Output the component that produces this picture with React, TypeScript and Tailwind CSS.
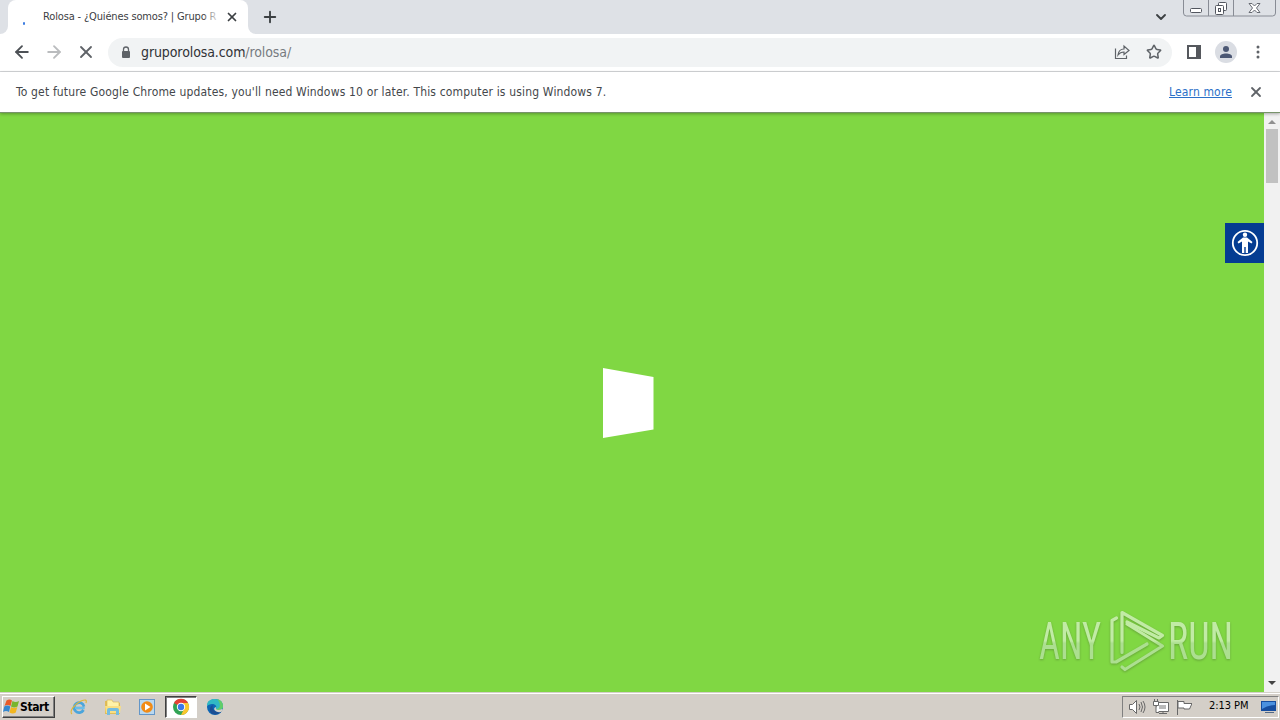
import type { ReactNode } from "react";
import { ArrowLeft, ArrowRight, ChevronDown, MoreVertical, Plus, Star, X } from "lucide-react";

const UI_FONT = "font-['DejaVu_Sans_Condensed','DejaVu_Sans',sans-serif] [font-stretch:condensed]";

function TabStrip() {
  return (
    <header className="flex h-[34px] bg-[#dee1e6]">
      <div className="w-2 bg-white">
        <div className="h-full rounded-br-lg bg-[#dee1e6]" />
      </div>
      <div className="flex w-60 items-center rounded-t-lg bg-white">
        <div className="ml-[15px] mt-3 h-[3px] w-[2px] rounded-full bg-[#3d7de0]" />
        <div className="relative ml-[18px] w-[178px] whitespace-nowrap text-[11px] leading-5 tracking-[-0.15px] text-[#3c4043]">
          Rolosa - ¿Quiénes somos? | Grupo R
          <div className="absolute inset-y-0 right-0 w-4 bg-linear-to-r from-white/20 to-white" />
        </div>
        <X size={14} strokeWidth={3} className="ml-1 shrink-0 text-[#3c4043]" />
      </div>
      <div className="w-2 bg-white">
        <div className="h-full rounded-bl-lg bg-[#dee1e6]" />
      </div>
      <Plus size={18} strokeWidth={2.5} className="ml-[5px] mt-2 text-[#3c4043]" />
      <ChevronDown size={16} strokeWidth={2.8} className="ml-auto mt-[9px] text-[#3c4043]" />
      <WindowButtons />
    </header>
  );
}

function WindowButtons() {
  return (
    <svg width="97" height="18" viewBox="0 0 97 18" className="ml-[14px] shrink-0" fill="none" stroke="#888c95">
      <path d="M.5 0v13q0 3 3 3h86q3 0 3-3V0M25.500 0v16M50.500 0v16" />
      <rect x="7.500" y="8.500" width="11" height="4" rx="1" fill="#fff" stroke="#52565f" />
      <rect x="35.500" y="2.500" width="8" height="8" rx="1" fill="#fff" stroke="#52565f" />
      <rect x="32.500" y="5.500" width="8" height="9" rx="1" fill="#fff" stroke="#52565f" />
      <rect x="35.500" y="8.500" width="2" height="3" stroke="#52565f" />
      <path d="m66 3.500h3l2.500 2.500 2.500-2.500h3l-3.500 4.500 3.500 4.500h-3l-2.500-2.500-2.500 2.500h-3l3.500-4.500z" fill="#fff" stroke="#676b73" />
    </svg>
  );
}

function Toolbar() {
  return (
    <div className="flex h-[38px] items-center border-b border-[#d5d7da] bg-white pb-px text-[#5f6368]">
      <ArrowLeft size={20} strokeWidth={2.2} className="ml-3 text-[#4d5156]" />
      <ArrowRight size={20} strokeWidth={2.2} className="ml-3 text-[#babcbe]" />
      <X size={20} strokeWidth={2.2} className="ml-3" />
      <div className="ml-3 flex h-[29px] w-[1064px] items-center rounded-full bg-[#f1f3f4]">
        <svg width="10" height="13" viewBox="0 0 10 13" className="ml-[13px]">
          <path d="M2.500 6V3.500a2.500 2.500 0 0 1 5 0V6" fill="none" stroke="#5f6368" strokeWidth="1.300" />
          <rect x="1" y="5" width="8" height="7" rx="1" fill="#5f6368" />
        </svg>
        <span className="ml-[10px] text-[14px] tracking-[-0.1px] text-[#303236]">
          gruporolosa.com<span className="text-[#777b80]">/rolosa/</span>
        </span>
        <svg width="16" height="16" viewBox="0 0 16 16" className="ml-auto" fill="none" stroke="currentColor" strokeWidth="1.200">
          <path d="M1.500 4.500v10h11v-3M4 11c.5-4 3-6 6-6V2l5 4.500-5 4V8c-2.500 0-4.500 1-6 3Z" />
        </svg>
        <Star size={16} strokeWidth={2.3} className="ml-4 mr-[10px]" />
      </div>
      <svg width="14" height="14" viewBox="0 0 14 14" className="ml-[15px]">
        <rect x="1" y="1" width="12" height="12" fill="none" stroke="#55585d" strokeWidth="2" />
        <path d="M9 1h4v12H9z" fill="#55585d" />
      </svg>
      <div className="ml-[14px] grid size-[22px] place-items-center rounded-full bg-[#dadde3]">
        <svg width="14" height="14" viewBox="0 0 14 14" fill="#4c5874">
          <circle cx="7" cy="4" r="3" />
          <path d="M1 13v-1.500C1 9.500 4 8.500 7 8.500s6 1 6 3V13Z" />
        </svg>
      </div>
      <svg width="18" height="18" viewBox="0 0 18 18" className="ml-3" fill="currentColor">
        <circle cx="9" cy="4" r="1.500" />
        <circle cx="9" cy="9" r="1.500" />
        <circle cx="9" cy="14" r="1.500" />
      </svg>
    </div>
  );
}

function InfoBar() {
  return (
    <div className="relative z-10 flex h-[41px] items-center border-b border-[#78936b] bg-white pb-px text-[12px] text-[#44474b] shadow-[0_1px_3px_rgba(0,0,0,0.3)]">
      <span className="ml-4 whitespace-nowrap tracking-[0.163px]">
        To get future Google Chrome updates, you'll need Windows 10 or later. This computer is using Windows 7.
      </span>
      <a className="ml-auto whitespace-nowrap tracking-[0.15px] text-[#2b70c8] underline">Learn more</a>
      <X size={16} strokeWidth={2.7} className="ml-4 mr-4 text-[#5f6368]" />
    </div>
  );
}

function AccessibilityBadge() {
  return (
    <div className="absolute right-0 top-[110px] grid h-10 w-[39px] place-items-center bg-[#043c92]">
      <svg width="28" height="28" viewBox="0 0 28 28" fill="#fff">
        <circle cx="14" cy="14" r="12.200" fill="none" stroke="#fff" strokeWidth="1.800" />
        <circle cx="14" cy="5.800" r="2.200" />
        <path d="m12 8.500-5.500 4.500 1 1.500 3.500-2v11.500h2.300V18h1.400v6H17V12.500l3.500 2 1-1.500L16 8.500z" />
      </svg>
    </div>
  );
}

function Watermark() {
  return (
    <svg width="206" height="72" viewBox="0 0 206 72" className="absolute bottom-[16px] right-[26px] drop-shadow-[0_1px_1px_rgba(60,90,40,0.4)]">
      <defs>
        <linearGradient id="glass" x1="0" y1="8" x2="0" y2="68" gradientUnits="userSpaceOnUse">
          <stop offset="0.48" stopColor="#c1eba5" />
          <stop offset="0.52" stopColor="#acdf90" />
        </linearGradient>
      </defs>
      <g fill="url(#glass)" className="font-['Roboto',sans-serif]" fontSize="51">
        <text x="7" y="55" textLength="62" lengthAdjust="spacingAndGlyphs">ANY</text>
        <text x="136" y="55" textLength="65" lengthAdjust="spacingAndGlyphs">RUN</text>
      </g>
      <g fill="none" stroke="url(#glass)" strokeWidth="3.200" strokeLinecap="round" strokeLinejoin="round">
        <path d="m84.500 14-4.500 2.500V58h4l31-18" />
        <path d="M90 48.500v-40l40.500 23-3.500 2.500-32-16" />
        <path d="m90 63 3 2.500 37.500-23.500L95 20" />
      </g>
    </svg>
  );
}

function Scrollbar() {
  return (
    <div className="flex w-4 flex-col items-center bg-[#f1f1f1]">
      <svg width="16" height="16" viewBox="0 0 16 16"><path d="m4 11 4-4 4 4z" fill="#909090" /></svg>
      <div className="h-[54px] w-3 bg-[#c1c1c1]" />
      <svg width="16" height="16" viewBox="0 0 16 16" className="mt-auto"><path d="m4 5 4 4 4-4z" fill="#444" /></svg>
    </div>
  );
}

function WindowsFlag() {
  return (
    <svg width="17" height="17" viewBox="0 0 17 17" className="shrink-0">
      <path d="M3.500 2.500q3-2 5.500 0L7.500 8Q4.500 6 1.500 8z" fill="#e95b29" />
      <path d="M9.500 3q3 2 6.500 0l-1.500 5.500q-3.500 2-6.500 0z" fill="#79b52e" />
      <path d="M1.300 8.500q3-2 6 0L6 14q-3-2-6 0z" fill="#3587cf" />
      <path d="M8 9q3 2 6.300 0l-1.500 5.500q-3 2-6.300 0z" fill="#f2b620" />
    </svg>
  );
}

function InternetExplorer() {
  return (
    <svg width="18" height="18" viewBox="0 0 18 18" fill="none">
      <path d="M14.500 10H5M14 8.500A5 5 0 1 0 13.500 12" stroke="#4aa5dc" strokeWidth="2.700" />
      <path d="M14.500 10H5" stroke="#8bd5f5" />
      <path d="M2 16C-1 14 4 6 11 3c5-2 6-1 5 2" stroke="#dfb638" strokeWidth="1.200" />
    </svg>
  );
}

function Explorer() {
  return (
    <svg width="18" height="18" viewBox="0 0 18 18">
      <path d="M1 3h5l1 2h9v11H1z" fill="#e0bd59" />
      <path d="M3 2h5l1 2h6v7H3z" fill="#fff2a8" stroke="#d6b34f" strokeWidth=".6" />
      <path d="M1 8h16l-1 7H2z" fill="#f9df83" />
      <path d="M3 17v-5q0-2 2-2h8q2 0 2 2v5h-3v-4H6v4z" fill="#74bce0" />
    </svg>
  );
}

function MediaPlayer() {
  return (
    <svg width="18" height="18" viewBox="0 0 18 18">
      <rect x="1.500" y="1.500" width="15" height="15" fill="#b9d8f0" stroke="#6396c8" />
      <circle cx="9" cy="9" r="5.800" fill="#f18b16" />
      <path d="m7 5.500 5.500 3.500L7 12.500z" fill="#fff" />
    </svg>
  );
}

function Chrome() {
  return (
    <svg width="18" height="18" viewBox="0 0 18 18">
      <circle cx="9" cy="9" r="8" fill="#31a354" />
      <path d="M9 9 2 5a8 8 0 0 1 14 0z" fill="#e54135" />
      <path d="M9 5h7A8 8 0 0 1 9 17l4-8z" fill="#fbc62d" />
      <circle cx="9" cy="9" r="4.200" fill="#fff" />
      <circle cx="9" cy="9" r="3.200" fill="#3c78e8" />
    </svg>
  );
}

function Edge() {
  return (
    <svg width="18" height="18" viewBox="0 0 18 18">
      <circle cx="9" cy="9" r="8" fill="#0d66b4" />
      <path d="M1 8C1 3 4 1 9 1c5 0 8 3 8 7 0 3-2 4-5 4-2 0-3-1-2-2 1-2-1-4-4-4-2 0-4 1-5 2z" fill="#31b9c4" />
      <path d="M11 1c4 1 6 4 6 7 0 3-2 4-5 4-1 0-2 0-2-1 5 0 5-6 1-10z" fill="#62cd69" />
      <path d="M7 7c-2 4 2 8 8 7-4 4-12 3-11-3 0-2 1-3 3-4z" fill="#1b4e94" />
      <path d="M10 9c-1 3 2 4 6 2l1 1-2 2c-6 1-9-4-5-5z" fill="#d4d0c8" />
    </svg>
  );
}

function TaskbarItem({ active = false, children }: { active?: boolean; children: ReactNode }) {
  return (
    <div
      className={`grid h-[22px] w-8 place-items-center border ${
        active ? "border-b-white border-l-[#404040] border-r-white border-t-[#404040] bg-white shadow-[inset_1px_1px_0_#808080]" : "border-transparent"
      }`}
    >
      {children}
    </div>
  );
}

function Tray() {
  return (
    <div className="ml-auto flex h-[22px] w-[157px] items-center border border-b-white border-l-[#808080] border-r-white border-t-[#808080]">
      <svg width="64" height="18" viewBox="0 0 64 18" className="ml-[5px] shrink-0" fill="#fff" stroke="#686868">
        <path d="M1.500 6.500h3l4-4v13l-4-4h-3z" />
        <path d="M11 6q2 3 0 6M13 4q3 5 0 10M15 3q4 6 0 12" fill="none" />
        <path d="M28.500 4.500h12v9h-12zM31 15.500h8M35 13.500v2" />
        <path d="M31 7h7v4h-7z" fill="#b9b9b9" stroke="none" />
        <path d="M25.500 3.500h5v4h-5zM26.500 1v3M29.500 1v3M28 7.500v7h3" />
        <path d="M49.500 2v15M50 3.500h6v2h8l-2.500 5.500h-5.500v-1h-6z" />
      </svg>
      <span className="ml-[17px] whitespace-nowrap text-[11px] tracking-[-0.05px] text-black">2:13 PM</span>
      <svg width="16" height="16" viewBox="0 0 16 16" className="ml-auto mr-px shrink-0">
        <path d="M0 2h15v10H0z" fill="#164d9f" />
        <path d="M1 3h13v3Q7 6 1 10z" fill="#4b91df" />
        <path d="M4 13h9v1H4z" fill="#526987" />
      </svg>
    </div>
  );
}

function Taskbar() {
  return (
    <footer className="flex h-7 items-center border-t border-[#d4d0c8] bg-[#d4cfc8] pr-px shadow-[inset_0_1px_0_#fff]">
      <button className="ml-[2px] mr-2 flex h-[22px] w-[53px] items-center border border-b-[#404040] border-l-white border-r-[#404040] border-t-white text-[12px] font-bold tracking-[-0.4px] text-black shadow-[inset_-1px_-1px_0_#808080]">
        <WindowsFlag />
        Start
      </button>
      <div className="flex gap-[2px]">
        <TaskbarItem><InternetExplorer /></TaskbarItem>
        <TaskbarItem><Explorer /></TaskbarItem>
        <TaskbarItem><MediaPlayer /></TaskbarItem>
        <TaskbarItem active><Chrome /></TaskbarItem>
        <TaskbarItem><Edge /></TaskbarItem>
      </div>
      <Tray />
    </footer>
  );
}

export default function App() {
  return (
    <div className={`flex h-screen w-full flex-col overflow-hidden bg-white ${UI_FONT}`}>
      <TabStrip />
      <Toolbar />
      <InfoBar />
      <div className="flex min-h-0 flex-1">
        <main className="relative flex-1 bg-[#80d743]">
          <svg width="51" height="70" viewBox="0 0 51 70" className="ml-[603px] mt-[255px]">
            <path d="m0 0 50.500 9v52.500L0 70z" fill="#fff" />
          </svg>
          <AccessibilityBadge />
          <Watermark />
        </main>
        <Scrollbar />
      </div>
      <Taskbar />
    </div>
  );
}
